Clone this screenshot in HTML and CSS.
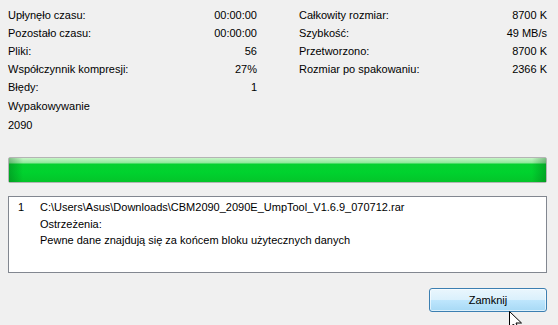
FILE: index.html
```html
<!DOCTYPE html>
<html lang="pl">
<head>
    <meta charset="UTF-8">
    <title>Wypakowywanie</title>
    <link rel="stylesheet" href="styles.css">
</head>
<body>
    <div class="dialog">
        <div class="stats">
            <div class="stat-col">
                <div class="row"><span>Upłynęło czasu:</span><span>00:00:00</span></div>
                <div class="row"><span>Pozostało czasu:</span><span>00:00:00</span></div>
                <div class="row"><span>Pliki:</span><span>56</span></div>
                <div class="row"><span>Współczynnik kompresji:</span><span>27%</span></div>
                <div class="row"><span>Błędy:</span><span>1</span></div>
            </div>
            <div class="stat-col">
                <div class="row"><span>Całkowity rozmiar:</span><span>8700 K</span></div>
                <div class="row"><span>Szybkość:</span><span>49 MB/s</span></div>
                <div class="row"><span>Przetworzono:</span><span>8700 K</span></div>
                <div class="row"><span>Rozmiar po spakowaniu:</span><span>2366 K</span></div>
            </div>
        </div>

        <div class="status">
            <div class="status-line">Wypakowywanie</div>
            <div class="status-line">2090</div>
        </div>

        <div class="progress">
            <div class="progress-fill"></div>
        </div>

        <div class="log">
            <div class="log-item">
                <span class="log-num">1</span>
                <div class="log-text">
                    <div>C:\Users\Asus\Downloads\CBM2090_2090E_UmpTool_V1.6.9_070712.rar</div>
                    <div>Ostrzeżenia:</div>
                    <div>Pewne dane znajdują się za końcem bloku użytecznych danych</div>
                </div>
            </div>
        </div>

        <div class="actions">
            <button class="close-btn">Zamknij</button>
            <svg class="cursor" width="14" height="22" viewBox="0 0 14 22">
                <path d="M0.5 0.5 L0.5 17 L4.5 13 L7.5 20 L10 19 L7 12 L12.5 12 Z" fill="#fff" stroke="#000" stroke-width="1"/>
            </svg>
        </div>
    </div>
</body>
</html>
```

FILE: styles.css
```css
* {
    margin: 0;
    padding: 0;
    box-sizing: border-box;
}

html, body {
    width: 558px;
    height: 325px;
    overflow: hidden;
}

body {
    font-family: 'Liberation Sans', Arial, sans-serif;
    font-size: 11px;
    color: #000;
    background: #f0f0f0;
}

.dialog {
    padding: 6px 11px 0 8px;
}

.stats {
    display: grid;
    grid-template-columns: 249px 248px;
    column-gap: 42px;
}

.row {
    display: flex;
    justify-content: space-between;
    height: 18px;
    line-height: 18px;
}

.status {
    margin-top: 1px;
}

.status-line {
    height: 19px;
    line-height: 19px;
}

.progress {
    margin-top: 22px;
    height: 26px;
    border: 1px solid #b4b4b4;
    border-radius: 2px;
    background: #e6e6e6;
}

.progress-fill {
    height: 100%;
    background:
        linear-gradient(to right, rgba(0, 90, 20, 0.35) 0, rgba(0, 90, 20, 0) 14px, rgba(0, 90, 20, 0) calc(100% - 14px), rgba(0, 90, 20, 0.35) 100%),
        linear-gradient(to bottom, #c8f5c8 0, #8fe89a 5px, #06d030 6px, #00d22e 60%, #04c42a 100%);
}

.log {
    margin-top: 13px;
    height: 77px;
    background: #fff;
    border: 1px solid #828790;
    padding: 2px 0 0 9px;
}

.log-item {
    display: flex;
}

.log-num {
    width: 22px;
    line-height: 16.5px;
}

.log-text div {
    line-height: 16.5px;
}

.actions {
    position: relative;
    display: flex;
    justify-content: flex-end;
    margin-top: 15px;
}

.close-btn {
    width: 118px;
    height: 24px;
    font-family: 'Liberation Sans', Arial, sans-serif;
    font-size: 11px;
    color: #000;
    border: 1px solid #3c7fb1;
    border-radius: 3px;
    background: linear-gradient(to bottom, #eaf6fd 0%, #d9f0fc 50%, #bee6fd 51%, #a7d9f5 100%);
    box-shadow: inset 0 0 0 1px rgba(255, 255, 255, 0.6);
}

.cursor {
    position: absolute;
    left: 501px;
    top: 23px;
}
```
